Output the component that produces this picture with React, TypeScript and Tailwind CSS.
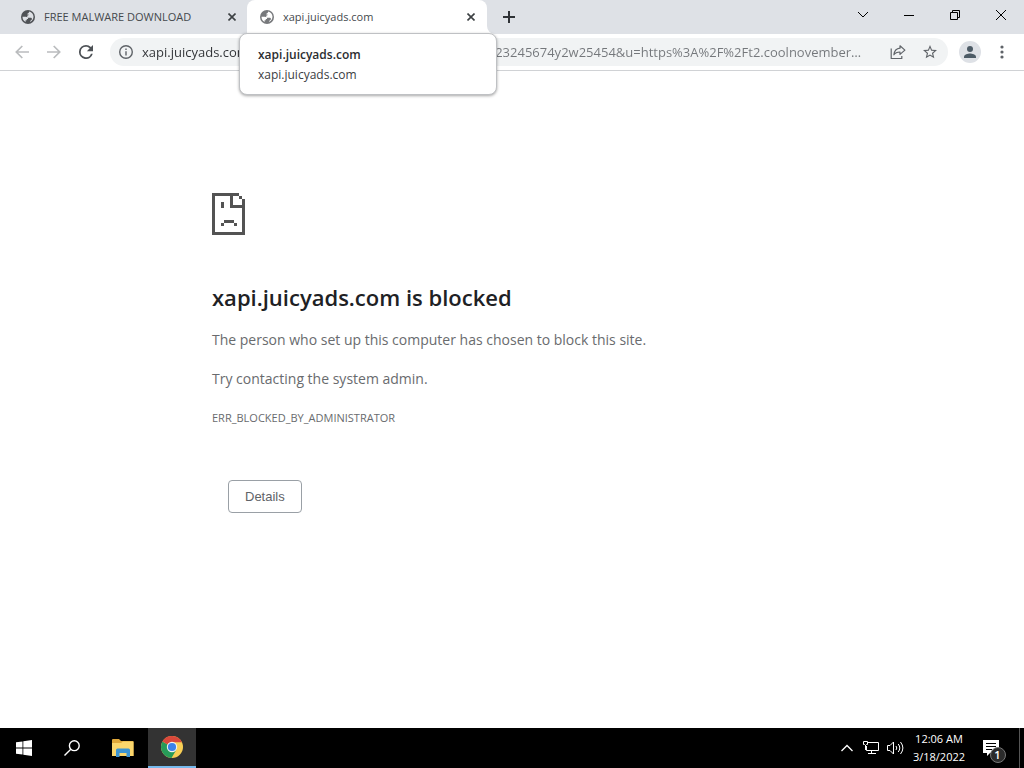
import type { ReactNode } from 'react'

type IconButtonProps = {
  label: string
  className?: string
  children: ReactNode
}

const IconButton = ({ label, className = '', children }: IconButtonProps) => (
  <button type="button" aria-label={label} className={`flex shrink-0 items-center justify-center ${className}`}>
    {children}
  </button>
)

const GlobeIcon = ({ className, land }: { className: string; land: string }) => (
  <svg viewBox="0 0 14 14" className={`size-3.5 shrink-0 ${className}`} fill="currentColor" aria-hidden="true">
    <circle cx="7" cy="7" r="7" />
    <path
      d="M1.500 6.800h3.300c1.500 0 2.300.8 2.300 2.100h-1.300v1.300H4.600v1.800C2.700 11.100 1.500 9.200 1.500 6.800zM8.300 1.600c2.300.5 4 2.500 4.200 4.900 0 2.400-1.200 4.300-3.400 5.400.2-1.400.9-1.800 1.800-2.500.3-1.200-.4-1.700-1.500-1.700H7.700c-.9 0-1.500-.6-1.500-1.300 0-.8.6-1.200 1.400-1.200V4.400H6.300c0-1.200.8-1.300 1.300-1.500z"
      fill={land}
    />
  </svg>
)

const CloseIcon = () => (
  <svg viewBox="0 0 8 8" className="size-2" stroke="#3c4043" strokeWidth="1.6" aria-hidden="true">
    <path d="M.5.5l7 7M7.5.5l-7 7" />
  </svg>
)

const TabStrip = () => (
  <header className="flex h-[34px] bg-[#dee1e6] text-[11px] text-[#45494d]">
    <div className="flex w-[247px] items-center pr-[7px] pl-[21px]">
      <GlobeIcon className="text-[#505357]" land="#dee1e6" />
      <span className="ml-[9px] flex-1 truncate">FREE MALWARE DOWNLOAD</span>
      <IconButton label="Close FREE MALWARE DOWNLOAD" className="size-4">
        <CloseIcon />
      </IconButton>
    </div>
    <div className="relative flex w-60 items-center rounded-t-lg bg-white pr-2 pl-[13px]">
      <GlobeIcon className="text-[#77797c]" land="#fff" />
      <span className="ml-[9px] flex-1 truncate">xapi.juicyads.com</span>
      <IconButton label="Close xapi.juicyads.com" className="size-4">
        <CloseIcon />
      </IconButton>
      <svg viewBox="0 0 8 8" className="absolute bottom-0 left-full size-2" fill="#fff" aria-hidden="true">
        <path d="M0 0v8h8a8 8 0 0 1-8-8z" />
      </svg>
      <div
        role="tooltip"
        className="absolute top-[33px] -left-2 z-10 w-[258px] rounded-lg border border-[#bfc1c4] bg-white px-[18px] pt-[11px] pb-[9px] text-[12px] leading-5 text-[#3c4043] shadow-[0_1px_3px_rgba(0,0,0,0.35)]"
      >
        <p className="font-semibold text-[#2b2d30]">xapi.juicyads.com</p>
        <p>xapi.juicyads.com</p>
      </div>
    </div>
    <IconButton label="New tab" className="ml-2 w-7">
      <svg viewBox="0 0 12 12" className="size-3" stroke="#2f3236" strokeWidth="2" aria-hidden="true">
        <path d="M6 0v12M0 6h12" />
      </svg>
    </IconButton>
    <div className="ml-auto flex h-[29px] text-black">
      <IconButton label="Search tabs" className="w-[46px]">
        <svg viewBox="0 0 12 8" className="h-2 w-3" fill="none" stroke="currentColor" aria-hidden="true">
          <path d="M1 1l5 5 5-5" />
        </svg>
      </IconButton>
      <IconButton label="Minimize" className="w-[46px]">
        <svg viewBox="0 0 10 10" className="size-2.5" stroke="currentColor" aria-hidden="true">
          <path d="M0 5.5h10" />
        </svg>
      </IconButton>
      <IconButton label="Restore" className="w-[46px]">
        <svg viewBox="0 0 10 10" className="size-2.5" fill="none" stroke="currentColor" aria-hidden="true">
          <path d="M.5 2.5h7v7h-7zM2.5 2.5v-2h7v7h-2" />
        </svg>
      </IconButton>
      <IconButton label="Close window" className="w-[46px]">
        <svg viewBox="0 0 10 10" className="size-2.5" stroke="currentColor" aria-hidden="true">
          <path d="M0 0l10 10M10 0L0 10" />
        </svg>
      </IconButton>
    </div>
  </header>
)

const Toolbar = () => (
  <nav className="flex h-[37px] items-center border-b border-[#d0d2d5] bg-white px-1.5 text-[#5f6368]">
    <IconButton label="Back" className="w-8 text-[#babcbe]">
      <svg viewBox="0 0 14 14" className="size-3.5" fill="none" stroke="currentColor" strokeWidth="1.7" aria-hidden="true">
        <path d="M14 7H1.5M7.3 1L1.3 7l6 6" />
      </svg>
    </IconButton>
    <IconButton label="Forward" className="w-8 text-[#babcbe]">
      <svg viewBox="0 0 14 14" className="size-3.5" fill="none" stroke="currentColor" strokeWidth="1.7" aria-hidden="true">
        <path d="M0 7h12.5M6.7 1l6 6-6 6" />
      </svg>
    </IconButton>
    <IconButton label="Reload" className="w-8 text-[#4d5156]">
      <svg viewBox="4 4 16 16" className="size-3.5" fill="currentColor" aria-hidden="true">
        <path d="M17.65 6.35A7.95 7.95 0 0 0 12 4a8 8 0 1 0 7.73 10h-2.08A6 6 0 1 1 12 6c1.66 0 3.14.69 4.22 1.78L13 11h7V4l-2.35 2.35z" />
      </svg>
    </IconButton>
    <div className="ml-2 flex h-7 min-w-0 flex-1 items-center rounded-full bg-[#f1f3f4] pr-0.5 pl-[9px]">
      <svg viewBox="2 2 20 20" className="size-3.5 shrink-0" fill="currentColor" aria-hidden="true">
        <path d="M11 7h2v2h-2zm0 4h2v6h-2zm1-9a10 10 0 1 0 0 20 10 10 0 0 0 0-20zm0 18a8 8 0 1 1 0-16 8 8 0 0 1 0 16z" />
      </svg>
      <input
        type="text"
        aria-label="Address and search bar"
        defaultValue="xapi.juicyads.com/service_advanced.php?juicy_code=a494i23245674y2w25454&u=https%3A%2F%2Ft2.coolnovembermx.com%2Fads"
        className="mr-3.5 ml-[9px] min-w-0 flex-1 bg-[linear-gradient(90deg,#303236_120px,#74777b_120px)] bg-clip-text pt-px text-[13px] text-ellipsis text-transparent outline-none"
      />
      <IconButton label="Share this page" className="w-8">
        <svg viewBox="0 0 16 16" className="size-4" fill="none" stroke="currentColor" strokeWidth="1.2" aria-hidden="true">
          <path
            d="M1.200 4.500v10h10.600v-2.500M10 1.800l4.900 4.300L10 10.400V8c-3 0-4.900.8-6.100 2.800.4-3.600 2.500-6.200 6.100-6.600z"
            strokeLinejoin="round"
          />
        </svg>
      </IconButton>
      <IconButton label="Bookmark this tab" className="w-8">
        <svg viewBox="2 2 20 20" className="size-3.5" fill="currentColor" aria-hidden="true">
          <path d="M22 9.240l-7.190-.62L12 2 9.190 8.630 2 9.240l5.460 4.730L5.820 21 12 17.270 18.180 21l-1.630-7.030L22 9.240zM12 15.400l-3.760 2.270 1-4.280-3.320-2.880 4.380-.38L12 6.100l1.710 4.040 4.380.38-3.320 2.880 1 4.280L12 15.400z" />
        </svg>
      </IconButton>
    </div>
    <IconButton label="Profile" className="mr-[5px] ml-[11px] size-[22px] rounded-full bg-[#dee1e6] text-[#4d5b66]">
      <svg viewBox="0 0 12 12" className="size-3" fill="currentColor" aria-hidden="true">
        <circle cx="6" cy="3" r="3" />
        <path d="M0 12v-1.500C0 8.500 4 7.400 6 7.400s6 1.100 6 3.100V12z" />
      </svg>
    </IconButton>
    <IconButton label="Chrome menu" className="w-8">
      <svg viewBox="0 0 4 14" className="h-3.5 w-1" fill="currentColor" aria-hidden="true">
        <circle cx="2" cy="2" r="1.600" />
        <circle cx="2" cy="7" r="1.600" />
        <circle cx="2" cy="12" r="1.600" />
      </svg>
    </IconButton>
  </nav>
)

const SadPageIcon = () => (
  <svg
    viewBox="0 0 33 42"
    className="h-[42px] w-[33px]"
    fill="#535353"
    shapeRendering="crispEdges"
    aria-hidden="true"
  >
    <path d="M0 0h27v3h-6v9h9V9h3v33H0zM3 3v36h27V15H18V3z" fillRule="evenodd" />
    <path d="M27 3h3v3h-3zM30 6h3v3h-3zM9 9h3v6H9zM12 27h10v3H12zM9 30h3v3H9zM22 30h3v3h-3z" />
  </svg>
)

const BlockedPage = () => (
  <main className="flex-1 bg-white px-6 pt-[122px] text-[#696b6e]">
    <div className="mx-auto max-w-[600px]">
      <SadPageIcon />
      <h1 className="mt-[47px] text-[22px] leading-[30px] font-semibold text-[#202124]">xapi.juicyads.com is blocked</h1>
      <p className="mt-4 text-[14px] leading-6">The person who set up this computer has chosen to block this site.</p>
      <p className="mt-[15px] text-[14px] leading-6">Try contacting the system admin.</p>
      <p className="mt-[17px] text-[11px] leading-5">ERR_BLOCKED_BY_ADMINISTRATOR</p>
      <button
        type="button"
        className="mt-[52px] ml-4 h-[33px] rounded border border-[#9aa0a6] px-4 font-['Liberation_Sans',Arial,sans-serif] text-[13px] text-[#5f6368]"
      >
        Details
      </button>
    </div>
  </main>
)

const Taskbar = () => (
  <footer className="flex h-10 bg-black text-white">
    <IconButton label="Start" className="w-12">
      <svg viewBox="0 0 16 16" className="size-4" fill="currentColor" aria-hidden="true">
        <path d="M0 2.300L6.500 1.400v6.100H0zM7.300 1.300L16 0v7.500H7.300zM0 8.400h6.500v6.200L0 13.700zM7.300 8.400H16V16l-8.700-1.200z" />
      </svg>
    </IconButton>
    <IconButton label="Search" className="w-12">
      <svg viewBox="0 0 16 16" className="size-4" fill="none" stroke="currentColor" strokeWidth="1.4" aria-hidden="true">
        <circle cx="10.300" cy="5.700" r="4.900" />
        <path d="M6.800 9.200L.5 15.500" />
      </svg>
    </IconButton>
    <IconButton label="File Explorer" className="ml-[3px] w-12">
      <svg viewBox="0 0 22 18" className="h-[18px] w-[22px]" aria-hidden="true">
        <path d="M0 1Q0 0 1 0h6l2 2h11.500q1 0 1 1v14H0z" fill="#e0a83a" />
        <path d="M0 4h9l2-1.500h10.500V17H0z" fill="#fbd66c" />
        <path d="M4 18v-7q0-1.500 1.500-1.500h11q1.500 0 1.500 1.500v7h-3.500v-4h-7v4z" fill="#3d94d1" />
      </svg>
    </IconButton>
    <IconButton label="Google Chrome" className="ml-px w-12 border-b-2 border-[#76b9ed] bg-[#333]">
      <svg viewBox="0 0 24 24" className="size-6" aria-hidden="true">
        <circle cx="12" cy="12" r="11" fill="#f9cf55" />
        <path d="M12 12L2.470 6.500A11 11 0 0 0 11.500 23L16.500 14.500z" fill="#279b59" />
        <path d="M12 12L2.470 6.500A11 11 0 0 1 21.900 7.300H12z" fill="#d9483b" />
        <circle cx="12" cy="12" r="5.200" fill="#f2f2f2" />
        <circle cx="12" cy="12" r="4.100" fill="#3c82e8" />
      </svg>
    </IconButton>
    <div className="ml-auto flex">
      <IconButton label="Show hidden icons" className="w-6">
        <svg viewBox="0 0 12 8" className="h-2 w-3" fill="none" stroke="currentColor" strokeWidth="1.3" aria-hidden="true">
          <path d="M.5 7L6 1.500 11.500 7" />
        </svg>
      </IconButton>
      <IconButton label="Network" className="w-6">
        <svg viewBox="0 0 16 14" className="h-3.5 w-4" fill="none" stroke="currentColor" aria-hidden="true">
          <path d="M5 1.500h10.500v8H3.500V5M.5.500h4v3h-1l-1 1-1-1h-1zM8.500 9.500v3M5 12.500h8M2.500 4v5" />
        </svg>
      </IconButton>
      <IconButton label="Volume" className="w-6">
        <svg viewBox="0 0 17 14" className="h-3.5 w-[17px]" fill="none" stroke="currentColor" aria-hidden="true">
          <path d="M.5 4.500h2.500l3.500-3.500v12L3 9.500H.5zM9 5q1.600 2 0 4M11.200 3q3.200 4 0 8M13.500 1q4.800 6 0 12" />
        </svg>
      </IconButton>
      <button type="button" aria-label="Date and time" className="w-16 text-center text-[11px] leading-[18px]">
        <span className="block">12:06 AM</span>
        <span className="block">3/18/2022</span>
      </button>
      <IconButton label="Notifications, 1 new" className="w-11 pr-1">
        <span className="relative">
          <svg viewBox="0 0 17 16" className="h-4 w-[17px]" aria-hidden="true">
            <path d="M0 0h16v13H7l-3 3v-3H0z" fill="#fff" />
            <path d="M3 3.500h10M3 6.500h10M3 9.500h6" stroke="#000" />
          </svg>
          <span className="absolute top-[7px] left-[7px] flex size-4 items-center justify-center rounded-full border border-[#777] bg-[#2b2b2b] text-[11px] font-semibold">
            1
          </span>
        </span>
      </IconButton>
      <button type="button" aria-label="Show desktop" className="ml-1 w-[5px] border-l border-[#555]" />
    </div>
  </footer>
)

export default function App() {
  return (
    <div className="flex min-h-screen flex-col bg-white font-['Open_Sans','Noto_Sans',sans-serif]">
      <TabStrip />
      <Toolbar />
      <BlockedPage />
      <Taskbar />
    </div>
  )
}
